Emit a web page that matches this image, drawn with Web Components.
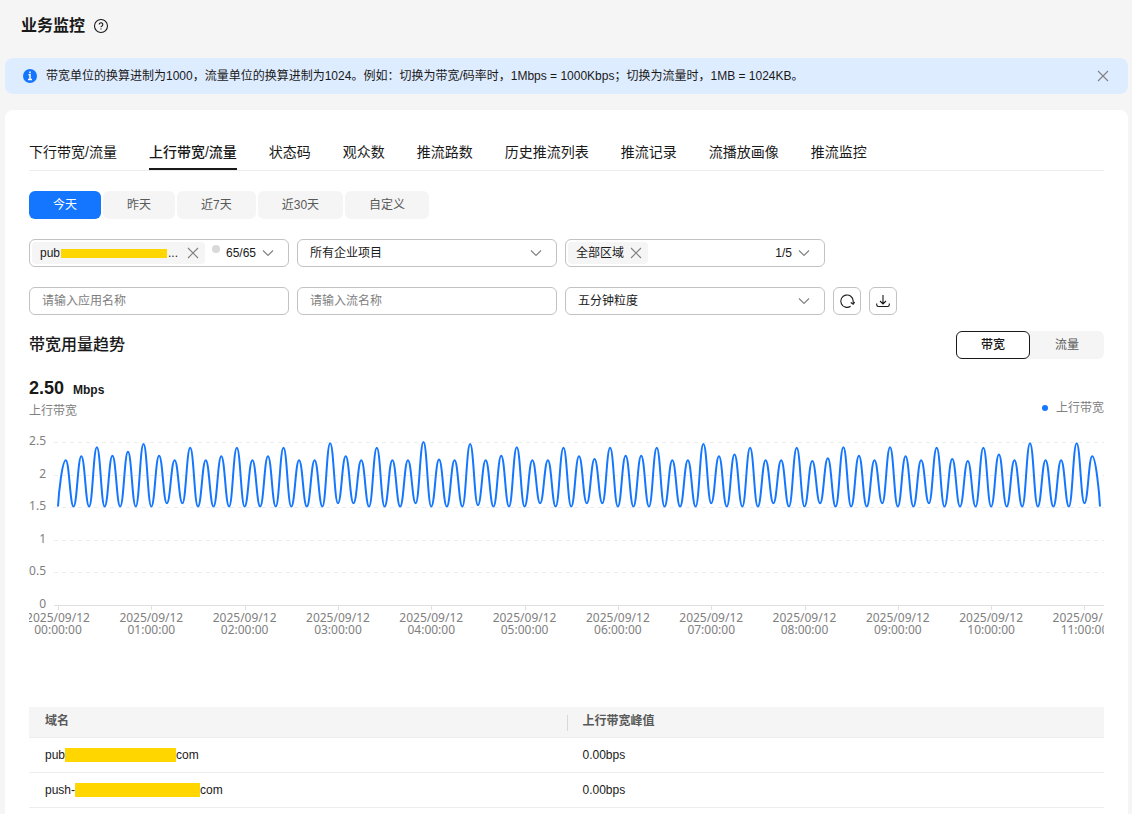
<!DOCTYPE html>
<html lang="zh-CN">
<head>
<meta charset="utf-8">
<title>业务监控</title>
<style>
    html {
        --ink: #191919;
        --muted: #595959;
        --hint: #808080;
        --border: #c2c2c2;
        --line: #ededed;
        --fill: #f5f5f5;
        --blue: #1476ff;
        --mask: #ffd600;
    }

    body {
        margin: 0;
        background: var(--fill);
        color: var(--ink);
        font: 12px/20px "Liberation Sans", "Noto Sans CJK SC", sans-serif;
    }
</style>
</head>
<body>
<monitor-page></monitor-page>

<script>
const ICONS = {
    help: '<circle cx="8" cy="8" r="6.5"/><path d="M6.2 6.5a1.8 1.8 0 1 1 2.7 1.6c-.6.3-.9.6-.9 1.2M8 10.6v1"/>',
    info: '<circle cx="8" cy="8" r="7" fill="#1476ff" stroke="none"/><path d="M6.5 6.8H8v4.7M6 11.6h4M8 3.6v1.7" stroke="#fff" stroke-width="1.5"/>',
    close: '<path d="M3 3l10 10M13 3L3 13"/>',
    down: '<path d="M3 5.5l5 5 5-5"/>',
    refresh: '<path d="M11.6 13.2A6.2 6.2 0 1 1 14.2 8v2.6"/><path d="M11.8 9.5l2.4 1.8 1.4-2.2"/>',
    download: '<path d="M8 2v9M5 8l3 3 3-3M1.7 10.5v1.3c0 1 .7 1.7 1.7 1.7h9.2c1 0 1.7-.7 1.7-1.7v-1.3"/>'
};

class UiIcon extends HTMLElement {
    constructor() {
        super();
        this.attachShadow({ mode: 'open' });
    }

    connectedCallback() {
        this.shadowRoot.innerHTML = `
            <style>
                :host {
                    display: inline-flex;
                    flex: none;
                    width: 16px;
                    height: 16px;
                }
            </style>
            <svg width="16" height="16" viewBox="0 0 16 16" fill="none" stroke="currentColor" stroke-width="1.1" aria-hidden="true">
                ${ICONS[this.getAttribute('name')]}
            </svg>
        `;
    }
}

class PageAlert extends HTMLElement {
    constructor() {
        super();
        this.attachShadow({ mode: 'open' });
    }

    connectedCallback() {
        this.shadowRoot.innerHTML = `
            <style>
                :host {
                    display: flex;
                    align-items: center;
                    gap: 8px;
                    padding: 8px 17px;
                    border-radius: 8px;
                    background: #deecff;
                }

                p {
                    flex: 1;
                    margin: 0;
                }

                button {
                    display: flex;
                    padding: 0;
                    border: 0;
                    background: none;
                    color: var(--hint);
                }
            </style>
            <ui-icon name="info"></ui-icon>
            <p><slot></slot></p>
            <button type="button" aria-label="关闭"><ui-icon name="close"></ui-icon></button>
        `;
        this.shadowRoot.querySelector('button').addEventListener('click', () => this.remove());
    }
}

class TabBar extends HTMLElement {
    constructor() {
        super();
        this.attachShadow({ mode: 'open' });
    }

    connectedCallback() {
        const items = this.getAttribute('items').split(',');
        const active = this.getAttribute('active');
        this.shadowRoot.innerHTML = `
            <style>
                :host {
                    display: block;
                    border-bottom: 1px solid var(--line);
                }

                nav {
                    display: flex;
                    gap: 32px;
                }

                a {
                    padding: 8px 0 6px;
                    border-bottom: 2px solid transparent;
                    color: inherit;
                    font-size: 14px;
                    line-height: 20px;
                    text-decoration: none;
                    white-space: nowrap;
                }

                a[aria-current] {
                    border-color: var(--ink);
                    font-weight: 500;
                }
            </style>
            <nav>
                ${items.map(t => `<a href="#" ${t === active ? 'aria-current="page"' : ''}>${t}</a>`).join('')}
            </nav>
        `;
    }
}

class RangeBar extends HTMLElement {
    constructor() {
        super();
        this.attachShadow({ mode: 'open' });
    }

    connectedCallback() {
        const items = this.getAttribute('items').split(',');
        this.shadowRoot.innerHTML = `
            <style>
                :host {
                    display: flex;
                    gap: 2px;
                }

                button {
                    height: 28px;
                    padding: 0 24px;
                    border: 0;
                    border-radius: 6px;
                    background: var(--fill);
                    color: var(--muted);
                    font: inherit;
                }

                button[aria-pressed="true"] {
                    background: var(--blue);
                    color: #fff;
                }
            </style>
            ${items.map((t, i) => `<button type="button" aria-pressed="${i === 0}">${t}</button>`).join('')}
        `;
        this.addPressEvents();
    }

    addPressEvents() {
        const buttons = this.shadowRoot.querySelectorAll('button');
        buttons.forEach(button => {
            button.addEventListener('click', () => {
                buttons.forEach(b => b.setAttribute('aria-pressed', b === button));
            });
        });
    }
}

class SegmentToggle extends RangeBar {
    connectedCallback() {
        super.connectedCallback();
        this.shadowRoot.querySelector('style').textContent = `
            :host {
                display: flex;
                border-radius: 6px;
                background: var(--fill);
            }

            button {
                height: 28px;
                padding: 0 24px;
                border: 1px solid transparent;
                border-radius: 6px;
                background: none;
                color: var(--muted);
                font: inherit;
            }

            button[aria-pressed="true"] {
                border-color: var(--ink);
                background: #fff;
                color: var(--ink);
                font-weight: 500;
            }
        `;
    }
}

// Multiple choice box: the first chosen value as a tag, then the count
class TagSelect extends HTMLElement {
    constructor() {
        super();
        this.attachShadow({ mode: 'open' });
    }

    connectedCallback() {
        this.shadowRoot.innerHTML = `
            <style>
                :host {
                    box-sizing: border-box;
                    display: flex;
                    align-items: center;
                    justify-content: space-between;
                    height: 28px;
                    padding: 0 12px 0 2px;
                    border: 1px solid var(--border);
                    border-radius: 6px;
                }

                .tag {
                    display: flex;
                    align-items: center;
                    gap: 4px;
                    height: 22px;
                    padding: 0 4px 0 8px;
                    border-radius: 4px;
                    background: var(--fill);
                }

                .text {
                    display: flex;
                    align-items: center;
                }

                button {
                    display: flex;
                    align-items: center;
                    gap: 4px;
                    padding: 0;
                    border: 0;
                    background: none;
                    color: inherit;
                    font: inherit;
                }

                ui-icon {
                    color: var(--hint);
                }
            </style>
            <span class="tag">
                <span class="text"><slot></slot></span>
                <button type="button" aria-label="移除"><ui-icon name="close"></ui-icon></button>
            </span>
            <slot name="extra"></slot>
            <button type="button" aria-haspopup="listbox">${this.getAttribute('count')}<ui-icon name="down"></ui-icon></button>
        `;
    }
}

class PlainSelect extends HTMLElement {
    constructor() {
        super();
        this.attachShadow({ mode: 'open' });
    }

    connectedCallback() {
        this.shadowRoot.innerHTML = `
            <style>
                :host {
                    display: grid;
                    align-items: center;
                }

                select {
                    grid-area: 1 / 1;
                    box-sizing: border-box;
                    width: 100%;
                    height: 28px;
                    padding: 0 32px 0 12px;
                    border: 1px solid var(--border);
                    border-radius: 6px;
                    background: #fff;
                    color: inherit;
                    font: inherit;
                    appearance: none;
                }

                ui-icon {
                    grid-area: 1 / 1;
                    justify-self: end;
                    margin-right: 13px;
                    color: var(--hint);
                    pointer-events: none;
                }
            </style>
            <select aria-label="${this.getAttribute('label')}">
                <option>${this.getAttribute('value')}</option>
            </select>
            <ui-icon name="down"></ui-icon>
        `;
    }
}

class TextField extends HTMLElement {
    constructor() {
        super();
        this.attachShadow({ mode: 'open' });
    }

    connectedCallback() {
        const hint = this.getAttribute('placeholder');
        this.shadowRoot.innerHTML = `
            <style>
                :host {
                    display: block;
                }

                input {
                    display: block;
                    box-sizing: border-box;
                    width: 100%;
                    height: 28px;
                    padding: 0 12px;
                    border: 1px solid var(--border);
                    border-radius: 6px;
                    background: #fff;
                    color: inherit;
                    font: inherit;
                }

                input::placeholder {
                    color: var(--hint);
                }
            </style>
            <input type="text" placeholder="${hint}" aria-label="${hint}">
        `;
    }
}

class IconButton extends HTMLElement {
    constructor() {
        super();
        this.attachShadow({ mode: 'open' });
    }

    connectedCallback() {
        this.shadowRoot.innerHTML = `
            <style>
                :host {
                    display: block;
                }

                button {
                    display: flex;
                    align-items: center;
                    justify-content: center;
                    width: 28px;
                    height: 28px;
                    padding: 0;
                    border: 1px solid var(--border);
                    border-radius: 6px;
                    background: #fff;
                    color: var(--ink);
                }
            </style>
            <button type="button" aria-label="${this.getAttribute('label')}"><ui-icon name="${this.getAttribute('icon')}"></ui-icon></button>
        `;
    }
}

// Highs and lows alternate, one sample each five minutes
const HIGHS = [
    2.22, 2.28, 2.42, 2.29, 2.35, 2.47, 2.29, 2.22, 2.41, 2.22, 2.28, 2.41,
    2.22, 2.28, 2.41, 2.22, 2.22, 2.48, 2.28, 2.22, 2.41, 2.22, 2.22, 2.5,
    2.23, 2.22, 2.47, 2.22, 2.29, 2.42, 2.22, 2.22, 2.41, 2.28, 2.24, 2.41,
    2.29, 2.29, 2.41, 2.22, 2.22, 2.47, 2.28, 2.31, 2.41, 2.22, 2.22, 2.41,
    2.21, 2.25, 2.42, 2.29, 2.22, 2.42, 2.28, 2.22, 2.41, 2.24, 2.21, 2.41,
    2.31, 2.22, 2.48, 2.22, 2.22, 2.48, 2.28
];
const LOWS = { 7: 1.56, 8: 1.56, 18: 1.56, 19: 1.56, 23: 1.56, 27: 1.53, 31: 1.56, 34: 1.56, 35: 1.56, 42: 1.56, 46: 1.56, 49: 1.56, 53: 1.56, 56: 1.56, 66: 1.56 };
const LOW = 1.51;

class TrendChart extends HTMLElement {
    constructor() {
        super();
        this.attachShadow({ mode: 'open' });
        this.resize = new ResizeObserver(() => this.draw());
    }

    connectedCallback() {
        this.shadowRoot.innerHTML = `
            <style>
                :host {
                    display: block;
                }

                svg {
                    display: block;
                    width: 100%;
                    height: 286px;
                    overflow: hidden;
                }

                text {
                    fill: var(--hint);
                    font: 12px "Noto Sans", sans-serif;
                }

                .grid {
                    stroke: var(--line);
                    stroke-dasharray: 4 4;
                }

                .axis {
                    stroke: #e0e0e0;
                }

                .series {
                    fill: none;
                    stroke: var(--blue);
                    stroke-width: 2;
                    stroke-linejoin: bevel;
                }
            </style>
            <svg role="img" aria-label="上行带宽"></svg>
        `;
        this.draw();
        this.resize.observe(this);
    }

    disconnectedCallback() {
        this.resize.disconnect();
    }

    draw() {
        const width = this.clientWidth;
        const left = 29;
        const base = 184;
        const scale = 65.2;
        const step = (width - left - 4) / (HIGHS.length * 2);

        const points = [[left, base - LOW * scale]];
        HIGHS.forEach((high, i) => {
            points.push([left + (2 * i + 1) * step, base - high * scale]);
            points.push([left + (2 * i + 2) * step, base - (LOWS[i + 1] || LOW) * scale]);
        });

        let d = `M${points[0]}`;
        for (let i = 1; i < points.length; i++) {
            const [x0, y0] = points[i - 1];
            const [x1, y1] = points[i];
            // the two ends of the line are steep, all other samples are flat turns
            const c0 = i === 1 ? [x0 + step * 0.1, y0 - 14] : [x0 + step * 0.45, y0];
            const c1 = i === points.length - 1 ? [x1 - step * 0.1, y1 - 14] : [x1 - step * 0.45, y1];
            d += `C${c0} ${c1} ${x1},${y1}`;
        }

        let marks = '';
        for (let v = 0; v <= 2.5; v += 0.5) {
            const y = Math.round(base - v * scale) + 0.5;
            marks += `<path class="${v ? 'grid' : 'axis'}" d="M25 ${y}H${width}"/>`;
            marks += `<text x="17" y="${y + 2.5}" text-anchor="end">${v}</text>`;
        }
        for (let h = 0; h <= 11; h++) {
            const x = left + h * 12 * step;
            const time = `${String(h).padStart(2, '0')}:00:00`;
            marks += `<path class="axis" d="M${Math.round(x) + 0.5} ${base + 1}v4"/>`;
            marks += `<text y="201" text-anchor="middle"><tspan x="${x}">2025/09/12</tspan><tspan x="${x}" dy="12">${time}</tspan></text>`;
        }

        this.shadowRoot.querySelector('svg').innerHTML = `${marks}<path class="series" d="${d}"/>`;
    }
}

class DomainTable extends HTMLElement {
    constructor() {
        super();
        this.attachShadow({ mode: 'open' });
    }

    connectedCallback() {
        this.shadowRoot.innerHTML = `
            <style>
                :host {
                    display: block;
                }

                table {
                    width: 100%;
                    border-collapse: separate;
                    border-spacing: 0;
                    table-layout: fixed;
                }

                th, td {
                    padding: 0 16px;
                    border-bottom: 1px solid var(--line);
                    text-align: left;
                }

                th {
                    height: 31px;
                    padding-bottom: 2px;
                    box-sizing: border-box;
                    background: var(--fill);
                    color: var(--muted);
                    font-weight: 700;
                }

                th + th {
                    background: linear-gradient(#d9d9d9, #d9d9d9) 0 8px / 1px 16px no-repeat var(--fill);
                }

                td {
                    height: 34px;
                }

                .cell {
                    display: flex;
                    align-items: center;
                }

                .mask {
                    width: 111px;
                    height: 14px;
                    background: var(--mask);
                }

                .mask.wide {
                    width: 125px;
                }
            </style>
            <table>
                <thead>
                    <tr><th>域名</th><th>上行带宽峰值</th></tr>
                </thead>
                <tbody>
                    <tr>
                        <td><span class="cell">pub<i class="mask"></i>com</span></td>
                        <td>0.00bps</td>
                    </tr>
                    <tr>
                        <td><span class="cell">push-<i class="mask wide"></i>com</span></td>
                        <td>0.00bps</td>
                    </tr>
                </tbody>
            </table>
        `;
    }
}

class MonitorPage extends HTMLElement {
    constructor() {
        super();
        this.attachShadow({ mode: 'open' });
    }

    connectedCallback() {
        this.render();
    }

    render() {
        this.shadowRoot.innerHTML = `
            <style>
                :host {
                    box-sizing: border-box;
                    display: flex;
                    flex-direction: column;
                    min-height: 100vh;
                    padding: 0 4px 0 5px;
                }

                h1, h2 {
                    margin: 0;
                    font-size: 16px;
                    font-weight: 500;
                    line-height: 24px;
                }

                h1 {
                    font-weight: 700;
                }

                header {
                    display: flex;
                    align-items: center;
                    gap: 8px;
                    height: 52px;
                    padding: 0 16px 6px;
                }

                main {
                    flex: 1;
                    margin-top: 16px;
                    padding: 24px 24px 4px;
                    border-radius: 8px 8px 0 0;
                    background: #fff;
                }

                range-bar {
                    margin: 20px 0;
                }

                .filters {
                    display: grid;
                    grid-template-columns: repeat(3, 260px) 28px 28px;
                    gap: 20px 8px;
                }

                .filters tag-select:nth-of-type(2) {
                    grid-column-end: span 3;
                    width: 260px;
                }

                .mask {
                    width: 106px;
                    height: 9px;
                    margin: 0 1px;
                    background: var(--mask);
                }

                .more {
                    padding-right: 3px;
                }

                .dot {
                    align-self: flex-start;
                    width: 8px;
                    height: 8px;
                    margin-top: 5px;
                    border-radius: 50%;
                    background: #d9d9d9;
                }

                .heading {
                    display: flex;
                    justify-content: space-between;
                    align-items: center;
                    margin: 16px 0;
                }

                .summary {
                    display: flex;
                    justify-content: space-between;
                    align-items: flex-end;
                    color: var(--hint);
                }

                .total {
                    display: flex;
                    align-items: baseline;
                    gap: 9px;
                    height: 26px;
                    color: var(--ink);
                    font-weight: 700;
                    line-height: 26px;
                }

                .total b {
                    font-size: 18px;
                }

                .legend {
                    display: flex;
                    align-items: center;
                    gap: 8px;
                    line-height: 26px;
                }

                .legend::before {
                    content: "";
                    width: 6px;
                    height: 6px;
                    border-radius: 50%;
                    background: var(--blue);
                }
            </style>
            <header>
                <h1>业务监控</h1>
                <ui-icon name="help"></ui-icon>
            </header>
            <page-alert>带宽单位的换算进制为1000，流量单位的换算进制为1024。例如：切换为带宽/码率时，1Mbps = 1000Kbps；切换为流量时，1MB = 1024KB。</page-alert>
            <main>
                <tab-bar
                    items="下行带宽/流量,上行带宽/流量,状态码,观众数,推流路数,历史推流列表,推流记录,流播放画像,推流监控"
                    active="上行带宽/流量"></tab-bar>
                <range-bar items="今天,昨天,近7天,近30天,自定义"></range-bar>
                <div class="filters">
                    <tag-select count="65/65">pub<i class="mask"></i><span class="more">...</span><i class="dot" slot="extra"></i></tag-select>
                    <plain-select label="企业项目" value="所有企业项目"></plain-select>
                    <tag-select count="1/5">全部区域</tag-select>
                    <text-field placeholder="请输入应用名称"></text-field>
                    <text-field placeholder="请输入流名称"></text-field>
                    <plain-select label="粒度" value="五分钟粒度"></plain-select>
                    <icon-button icon="refresh" label="刷新"></icon-button>
                    <icon-button icon="download" label="下载"></icon-button>
                </div>
                <div class="heading">
                    <h2>带宽用量趋势</h2>
                    <segment-toggle items="带宽,流量"></segment-toggle>
                </div>
                <div class="summary">
                    <div>
                        <div class="total"><b>2.50</b>Mbps</div>
                        上行带宽
                    </div>
                    <div class="legend">上行带宽</div>
                </div>
                <trend-chart></trend-chart>
                <domain-table></domain-table>
            </main>
        `;
    }
}

customElements.define('ui-icon', UiIcon);
customElements.define('page-alert', PageAlert);
customElements.define('tab-bar', TabBar);
customElements.define('range-bar', RangeBar);
customElements.define('segment-toggle', SegmentToggle);
customElements.define('tag-select', TagSelect);
customElements.define('plain-select', PlainSelect);
customElements.define('text-field', TextField);
customElements.define('icon-button', IconButton);
customElements.define('trend-chart', TrendChart);
customElements.define('domain-table', DomainTable);
customElements.define('monitor-page', MonitorPage);
</script>
</body>
</html>
